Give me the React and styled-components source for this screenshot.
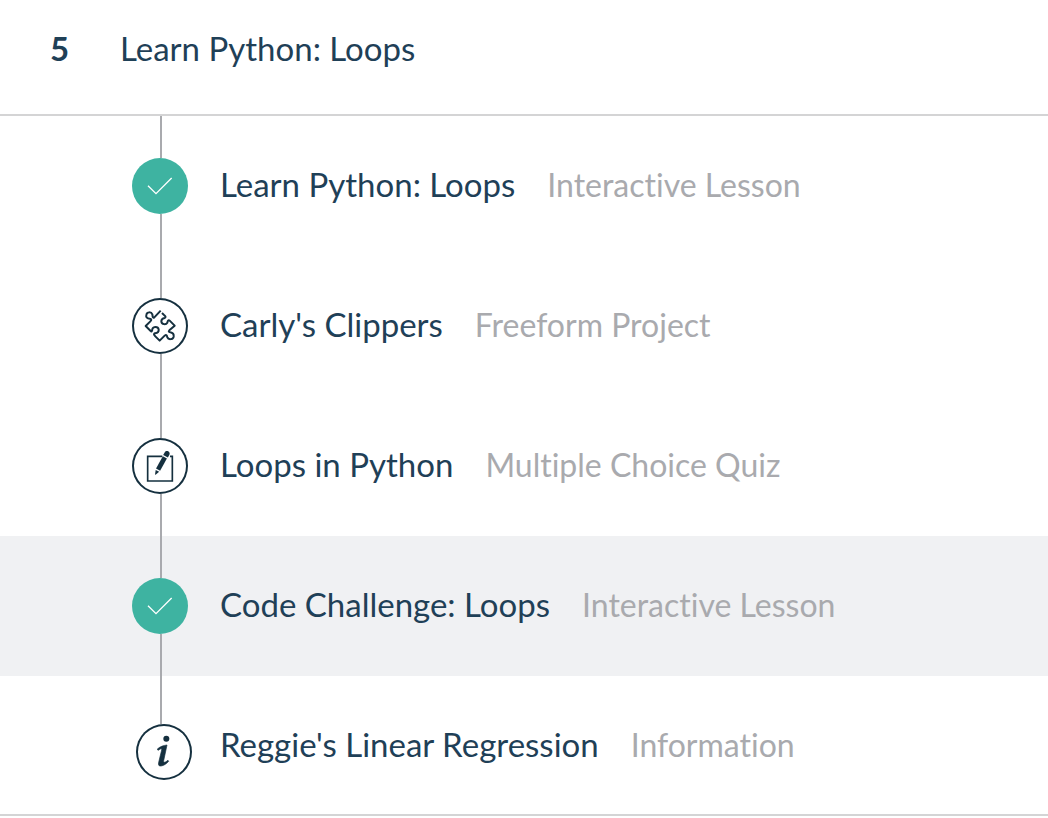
import React from "react";
import styled, { createGlobalStyle } from "styled-components";

const NAVY = "#1f4057";
const INK = "#15303f";
const TEAL = "#3eb3a1";
const MUTED = "#a9aaae";
const RULE = "#d4d4d5";

const GlobalStyle = createGlobalStyle`
  *, *::before, *::after { box-sizing: border-box; }
  body {
    margin: 0;
    background: #fff;
    color: ${NAVY};
    font-family: Lato, "Noto Sans", sans-serif;
    font-size: 33px;
    font-variant-ligatures: none;
    line-height: 44px;
  }
`;

const Module = styled.section`
  border-bottom: 2px solid ${RULE};
`;

const Header = styled.h2`
  margin: 0;
  border-bottom: 2px solid ${RULE};
  font: inherit;
`;

const Toggle = styled.button`
  display: flex;
  width: 100%;
  padding: 26px 50px 44px;
  border: 0;
  background: none;
  color: inherit;
  font: inherit;
  font-variant-ligatures: none;
  text-align: left;
  cursor: pointer;
`;

const Index = styled.span`
  flex: 0 0 70px;
  font-weight: 700;
`;

const List = styled.ol`
  margin: 0;
  padding: 0;
  list-style: none;
`;

const Row = styled.a`
  display: flex;
  gap: 32px;
  min-height: ${(p) => (p.$last ? 138 : 140)}px;
  padding: 0 32px 0 132px;
  background: ${(p) => (p.$active ? "#f0f1f3" : "transparent")};
  color: inherit;
  text-decoration: none;
`;

const Track = styled.span`
  display: flex;
  flex: 0 0 56px;
  flex-direction: column;
  min-width: 0;
`;

const Segment = styled.span`
  flex: ${(p) => (p.$long ? "0 0 48px" : "1 0 42px")};
  width: 2px;
  margin-left: 28px;
  background: ${MUTED};
`;

const Badge = styled.span`
  display: flex;
  flex: 0 0 56px;
  width: 56px;
  margin-left: ${(p) => (p.$shifted ? 4 : 0)}px;
  border-radius: 50%;
  background: ${(p) => (p.$done ? TEAL : "#fff")};
  box-shadow: ${(p) => (p.$done ? "none" : `inset 0 0 0 2px ${INK}`)};
`;

const Glyph = styled.svg`
  width: 56px;
  height: 56px;
  fill: none;
  stroke: ${(p) => (p.$light ? "#fff" : INK)};
`;

const Label = styled.span`
  display: flex;
  flex-wrap: wrap;
  align-items: baseline;
  align-self: flex-start;
  column-gap: 32px;
  padding-top: 46px;
`;

const Kind = styled.span`
  color: ${MUTED};
  font-size: 32px;
`;

const CheckIcon = () => (
  <Glyph viewBox="0 0 168 168" $light aria-hidden="true">
    <path d="M48 83l24 24 47-47" strokeWidth="4" />
  </Glyph>
);

const PuzzleIcon = () => (
  <Glyph viewBox="21 24 168 168" strokeWidth="6" strokeLinejoin="round" aria-hidden="true">
    <path d="M107 62L88 82C82 86 83 77 82 73C79 65 66 65 64 74C62 82 67 86 74 86C80 87 80 90 76 94L62 108L77 123C80 127 82 121 82 117C85 109 99 108 101 118C102 126 96 129 90 130C85 131 87 135 91 139L104 152L119 137C124 133 126 136 127 142C130 150 144 149 146 140C147 132 142 128 136 127C131 126 130 124 133 121L149 107L134 92C130 88 128 93 127 98C123 105 110 104 109 94C109 87 114 85 119 84C123 83 122 79 119 77L111 69" />
  </Glyph>
);

const QuizIcon = () => (
  <Glyph viewBox="21 24 168 168" strokeWidth="5" aria-hidden="true">
    <path d="M112 79H68V153H142V79H135" />
    <g transform="translate(91 134) rotate(29)" fill={INK} stroke="none">
      <path d="M-7 -59H7V-17H-7Z" />
      <path d="M-8 -63V-72C-8 -83 8 -83 8 -72V-63Z" />
      <path d="M-6 -13H6L1 0H-1Z" />
    </g>
  </Glyph>
);

const InfoIcon = () => (
  <Glyph viewBox="33 24 168 168" aria-hidden="true">
    <circle cx="124" cy="68" r="9" fill={INK} stroke="none" />
    <path d="M97 99C106 91 117 88 126 87L116 134C115 142 121 139 129 133L131 136C123 145 112 151 105 150C99 149 100 143 102 135L110 102C111 96 107 98 99 103Z" fill={INK} strokeWidth="2" />
  </Glyph>
);

const icons = { check: CheckIcon, puzzle: PuzzleIcon, quiz: QuizIcon, info: InfoIcon };

const lessons = [
  { title: "Learn Python: Loops", kind: "Interactive Lesson", icon: "check" },
  { title: "Carly's Clippers", kind: "Freeform Project", icon: "puzzle" },
  { title: "Loops in Python", kind: "Multiple Choice Quiz", icon: "quiz" },
  { title: "Code Challenge: Loops", kind: "Interactive Lesson", icon: "check", active: true },
  { title: "Reggie's Linear Regression", kind: "Information", icon: "info" },
];

function Lesson({ title, kind, icon, active, last }) {
  const Icon = icons[icon];
  return (
    <li>
      <Row href="#" $active={active} $last={last}>
        <Track>
          <Segment $long={last} />
          <Badge $done={icon === "check"} $shifted={last}>
            <Icon />
          </Badge>
          {!last && <Segment />}
        </Track>
        <Label>
          <span>{title}</span>
          <Kind>{kind}</Kind>
        </Label>
      </Row>
    </li>
  );
}

export default function App() {
  return (
    <>
      <GlobalStyle />
      <Module>
        <Header>
          <Toggle type="button" aria-expanded="true">
            <Index>5</Index>
            <span>Learn Python: Loops</span>
          </Toggle>
        </Header>
        <List>
          {lessons.map((lesson, i) => (
            <Lesson key={lesson.title} {...lesson} last={i === lessons.length - 1} />
          ))}
        </List>
      </Module>
    </>
  );
}
